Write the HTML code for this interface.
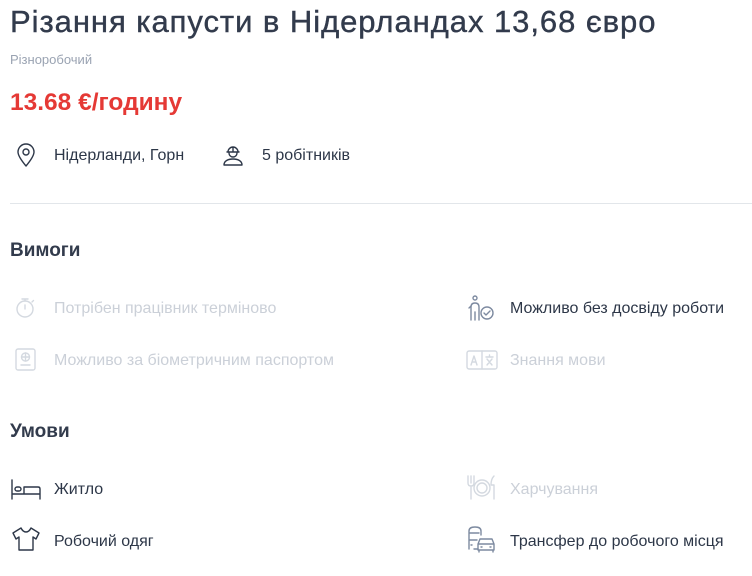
<!DOCTYPE html>
<html><head><meta charset="utf-8"><style>
body{margin:0;width:752px;height:576px;background:#fff;font-family:"Liberation Sans","DejaVu Sans",sans-serif;color:#2d3748;position:relative;overflow:hidden}
.a{position:absolute;white-space:nowrap}
.t{font-size:16px}
.g{color:#cbd0d8}
svg{position:absolute;fill:none;stroke-width:1.4;stroke-linecap:round;stroke-linejoin:round}
.d{stroke:#2d3748}.l{stroke:#d4d9e0}.b{stroke:#7d8aa0}
</style></head><body>
<div class="a" style="left:10px;top:4px;font-size:31px;font-weight:500;color:#323b4c;letter-spacing:0.95px;-webkit-text-stroke:0.4px #323b4c">Різання капусти в Нідерландах 13,68 євро</div>
<div class="a" style="left:10px;top:52px;font-size:13px;color:#9aa3b2">Різноробочий</div>
<div class="a" style="left:10px;top:89px;font-size:24.5px;font-weight:bold;color:#e53935">13.68 €/годину</div>

<svg class="d" style="left:14px;top:142px" width="24" height="26" viewBox="0 0 24 26"><path d="M12 24C7 18 4 13.5 4 10a8 8 0 0 1 16 0c0 3.5-3 8-8 14z"/><circle cx="12" cy="10" r="3"/></svg>
<div class="a t" style="left:54px;top:147px">Нідерланди, Горн</div>
<svg class="d" style="left:220px;top:142px" width="26" height="26" viewBox="0 0 26 26"><path d="M8 10a5 5 0 0 1 10 0zM13 5v5M7 10h12M9 11a4 4 0 0 0 8 0M4 23c0-4 4-6 9-6s9 2 9 6z"/></svg>
<div class="a t" style="left:262px;top:147px">5 робітників</div>

<div class="a" style="left:10px;top:203px;width:742px;height:1px;background:#e2e6ea"></div>

<div class="a" style="left:10px;top:240px;font-size:19px;font-weight:bold;color:#323b4c">Вимоги</div>

<svg class="l" style="left:14px;top:296px" width="24" height="24" viewBox="0 0 24 24"><circle cx="11" cy="13" r="8"/><path d="M8 3h6M11 3v2M11 13V9M18 6l1.5-1.5"/></svg>
<div class="a t g" style="left:54px;top:300px">Потрібен працівник терміново</div>
<svg class="l" style="left:14px;top:347px" width="24" height="26" viewBox="0 0 24 26"><rect x="2" y="2" width="19" height="21" rx="2"/><circle cx="11.5" cy="10" r="4"/><path d="M7.5 10h8M11.5 6v8M7 18h9"/></svg>
<div class="a t g" style="left:54px;top:352px">Можливо за біометричним паспортом</div>

<svg class="b" style="left:466px;top:294px" width="30" height="28" viewBox="0 0 30 28"><circle cx="9" cy="4" r="2"/><path d="M5 26V13q0-4 4-4t4 4v13M9 18v8M3 14l2-2"/><circle cx="21" cy="19" r="6"/><path d="M18 19l2 2 4-4"/></svg>
<div class="a t" style="left:510px;top:300px">Можливо без досвіду роботи</div>
<svg class="l" style="left:466px;top:350px" width="32" height="20" viewBox="0 0 32 20"><rect x="1" y="1" width="30" height="18" rx="2"/><path d="M16 1v18M5 15l3-9 3 9M6 12h4M20 7h7M23.5 5v2M21 15l5-6M21 9l5 6"/></svg>
<div class="a t g" style="left:510px;top:352px">Знання мови</div>

<div class="a" style="left:10px;top:421px;font-size:19px;font-weight:bold;color:#323b4c">Умови</div>

<svg class="d" style="left:10px;top:478px" width="32" height="22" viewBox="0 0 32 22"><path d="M2 2v19M2 16h28v5M30 16v-5q0-2-2-2H14v7"/><rect x="5" y="9" width="6" height="4" rx="2"/></svg>
<div class="a t" style="left:54px;top:481px">Житло</div>
<svg class="d" style="left:10px;top:526px" width="32" height="26" viewBox="0 0 32 26"><path d="M11 2l-8 5 3 6 3-2v13h14V11l3 2 3-6-8-5q-2 4-5 4t-5-4z"/></svg>
<div class="a t" style="left:54px;top:533px">Робочий одяг</div>

<svg class="l" style="left:466px;top:474px" width="32" height="28" viewBox="0 0 32 28"><path d="M2 2v7q0 3 3 3v13M5 2v7M8 2v7q0 3-3 3"/><circle cx="16" cy="14" r="8"/><circle cx="16" cy="14" r="5"/><path d="M28 2q-3 3-3 9h3v14"/></svg>
<div class="a t g" style="left:510px;top:481px">Харчування</div>
<svg class="b" style="left:466px;top:525px" width="32" height="28" viewBox="0 0 32 28"><path d="M3 24V6q0-4 6-4t6 4v4M3 15h8M3 8h10M5 20h1M8 24h4"/><path d="M12 25v-6l2-5h12l2 5v6zM12 19h16M15 22h1M24 22h1M13 25v2M27 25v2"/></svg>
<div class="a t" style="left:510px;top:533px">Трансфер до робочого місця</div>
</body></html>
